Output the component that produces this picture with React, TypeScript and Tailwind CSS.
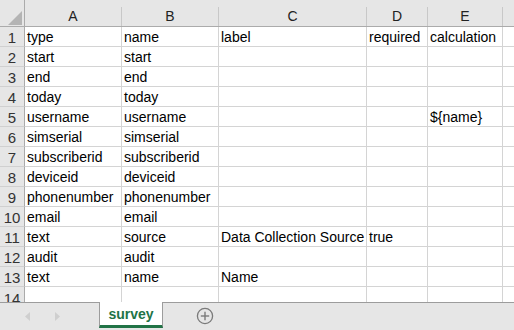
import React from "react";

const cols = [
  { key: "A", w: "w-[97px]" },
  { key: "B", w: "w-[97px]" },
  { key: "C", w: "w-[148px]" },
  { key: "D", w: "w-[61px]" },
  { key: "E", w: "w-[75px]" },
];

const rows: string[][] = [
  ["type", "name", "label", "required", "calculation"],
  ["start", "start", "", "", ""],
  ["end", "end", "", "", ""],
  ["today", "today", "", "", ""],
  ["username", "username", "", "", "${name}"],
  ["simserial", "simserial", "", "", ""],
  ["subscriberid", "subscriberid", "", "", ""],
  ["deviceid", "deviceid", "", "", ""],
  ["phonenumber", "phonenumber", "", "", ""],
  ["email", "email", "", "", ""],
  ["text", "source", "Data Collection Source", "true", ""],
  ["audit", "audit", "", "", ""],
  ["text", "name", "Name", "", ""],
];

export default function App() {
  return (
    <div
      className="w-[514px] h-[330px] overflow-hidden bg-white flex flex-col text-[14px] text-black"
      style={{ fontFamily: '"Liberation Sans", Arial, sans-serif' }}
    >
      {/* header row */}
      <div className="flex h-[27px] shrink-0 bg-[#e6e6e6] border-b border-[#ababab]">
        <div className="w-[25px] shrink-0 border-r border-[#ababab] relative">
          <svg className="absolute left-[8px] top-[11px]" width="15" height="15" viewBox="0 0 15 15">
            <polygon points="14,0 14,14 0,14" fill="#b4b4b4" />
          </svg>
        </div>
        {cols.map((c) => (
          <div key={c.key} className={`${c.w} shrink-0 flex flex-col`}>
            <div className="h-[7px]" />
            <div className="flex-1 border-r border-[#c8c8c8] flex items-center justify-center text-[#222] leading-none pb-[1px]">
              {c.key}
            </div>
          </div>
        ))}
        <div className="flex-1 flex flex-col">
          <div className="h-[7px]" />
          <div className="flex-1" />
        </div>
      </div>

      {rows.map((r, i) => (
        <div key={i} className="flex h-[20px] shrink-0">
          <div className="w-[25px] shrink-0 bg-[#e6e6e6] border-r border-[#ababab] border-b border-b-[#d0d0d0] flex items-center justify-center text-[#333] text-[15px] leading-none pt-[1px]">
            {i + 1}
          </div>
          {cols.map((c, j) => (
            <div
              key={c.key}
              className={`${c.w} shrink-0 border-r border-b border-[#d4d4d4] flex items-end pl-[2px] leading-[17px] whitespace-nowrap overflow-visible`}
            >
              {r[j]}
            </div>
          ))}
          <div className="flex-1 border-b border-[#d4d4d4]" />
        </div>
      ))}

      {/* row 14 partial */}
      <div className="flex h-[15px] shrink-0 overflow-hidden">
        <div className="w-[25px] shrink-0 bg-[#e6e6e6] border-r border-[#ababab] flex items-start justify-center text-[#333] text-[15px] leading-none pt-[4px]">
          14
        </div>
        {cols.map((c) => (
          <div key={c.key} className={`${c.w} shrink-0 border-r border-[#d4d4d4]`} />
        ))}
        <div className="flex-1" />
      </div>

      {/* sheet tabs bar */}
      <div className="flex-1 bg-[#e6e6e6] border-t border-[#9c9c9c] flex items-start">
        <div className="w-[99px] shrink-0 flex items-center h-[26px] pl-[25px] gap-[24px]">
          <svg width="6" height="9" viewBox="0 0 6 9">
            <polygon points="5,0 5,9 0,4.5" fill="#cfcfcf" />
          </svg>
          <svg width="6" height="9" viewBox="0 0 6 9">
            <polygon points="0,0 0,9 5,4.5" fill="#cfcfcf" />
          </svg>
        </div>
        <div className="w-[64px] shrink-0 h-[26px] -mt-[1px] bg-white border-l border-r border-[#9c9c9c] border-b-[3px] border-b-[#217346] flex items-center justify-center font-bold text-[#217346] text-[14px] leading-none pt-[1px]">
          survey
        </div>
        <div className="flex-1 h-[26px] flex items-center pl-[33px]">
          <svg width="18" height="18" viewBox="0 0 18 18">
            <circle cx="9" cy="9" r="7.6" fill="none" stroke="#7a7a7a" strokeWidth="1.3" />
            <line x1="9" y1="4.8" x2="9" y2="13.2" stroke="#7a7a7a" strokeWidth="1.4" />
            <line x1="4.8" y1="9" x2="13.2" y2="9" stroke="#7a7a7a" strokeWidth="1.4" />
          </svg>
        </div>
      </div>
    </div>
  );
}
